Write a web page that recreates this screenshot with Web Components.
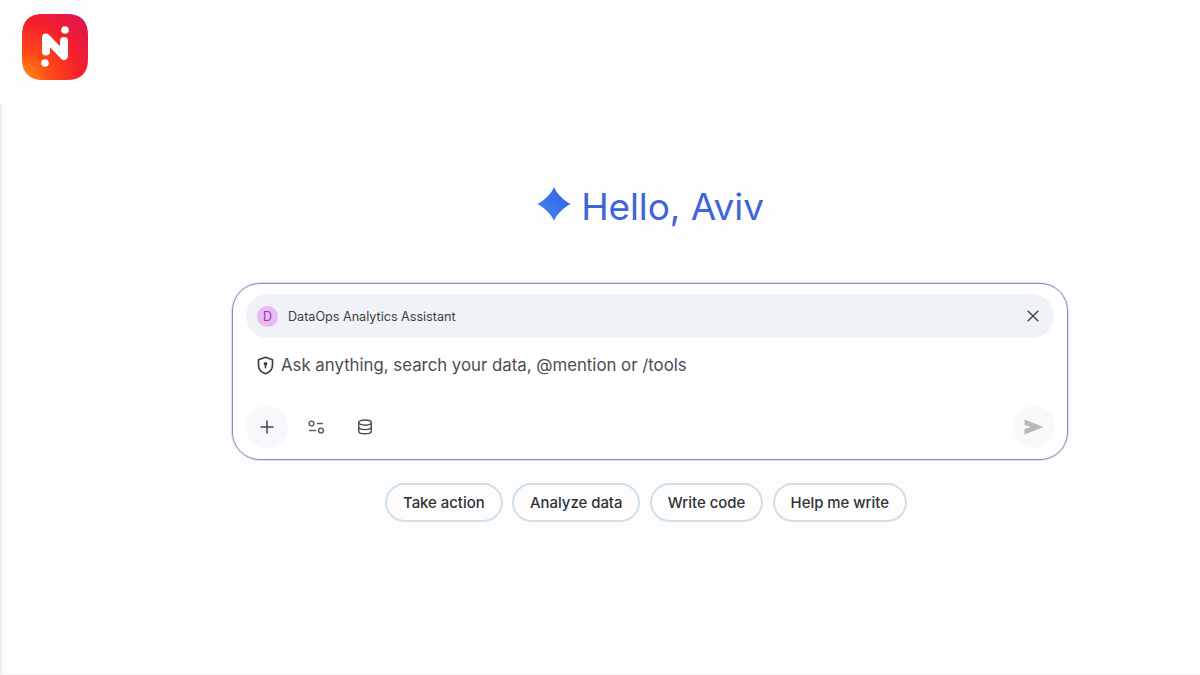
<!DOCTYPE html>
<html>
<head>
<meta charset="utf-8">
<style>
	html, body { margin: 0; height: 100%; }
	body { background: #fdfdfd; font-family: Inter, "Liberation Sans", sans-serif; overflow: hidden; }
</style>
</head>
<body>
<chat-app>
	<brand-logo slot="logo"></brand-logo>
	<chat-greeting slot="greeting">Hello, Aviv</chat-greeting>
	<chat-box slot="box">
		<agent-bar name="DataOps Analytics Assistant" initial="D"></agent-bar>
	</chat-box>
	<div slot="chips">
		<prompt-chip>Take action</prompt-chip>
		<prompt-chip>Analyze data</prompt-chip>
		<prompt-chip>Write code</prompt-chip>
		<prompt-chip>Help me write</prompt-chip>
	</div>
</chat-app>

<script type="text/javascript">
	class ChatApp extends HTMLElement {
		connectedCallback() {
			this.attachShadow({mode: 'open'}).innerHTML = `
				<style>
					:host { display: block; position: relative; height: 675px; box-sizing: border-box; padding-top: 103px; }
					.frame {
						height: 100%;
						box-sizing: border-box;
						border-left: 2px solid #efefef;
						border-bottom: 1px solid #f8f8f8;
						padding: 79px 130px 0 230px;
						display: flex;
						flex-direction: column;
						align-items: center;
					}
					::slotted([slot=chips]) { display: flex; gap: 9.4px; margin: 23px 0 0 -10px; }
					.logo { position: absolute; left: 22px; top: 14px; }
				</style>
				<div class="logo"><slot name="logo"></slot></div>
				<div class="frame">
					<slot name="greeting"></slot>
					<slot name="box"></slot>
					<slot name="chips"></slot>
				</div>`;
		}
	}

	class BrandLogo extends HTMLElement {
		connectedCallback() {
			this.attachShadow({mode: 'open'}).innerHTML = `
				<style>:host { display: block; width: 66px; height: 66px; } svg { display: block; }</style>
				<svg width="66" height="66" viewBox="0 0 66 66">
					<defs>
						<radialGradient id="g" cx="0" cy="1" r="1.3">
							<stop offset="0" stop-color="#ff9a12"/>
							<stop offset="0.32" stop-color="#ff4a18"/>
							<stop offset="0.68" stop-color="#f4202c"/>
							<stop offset="1" stop-color="#e0164f"/>
						</radialGradient>
					</defs>
					<path d="M21 0H45C59 0 66 7 66 21V45C66 59 59 66 45 66H21C7 66 0 59 0 45V21C0 7 7 0 21 0Z" fill="url(#g)"/>
					<path d="M24 37.5V23.5L42 42V27" fill="none" stroke="#fff" stroke-width="8" stroke-linecap="round" stroke-linejoin="round"/>
					<circle cx="43" cy="16" r="3.8" fill="#fff"/>
					<circle cx="23" cy="49" r="3.8" fill="#fff"/>
				</svg>`;
		}
	}

	class ChatGreeting extends HTMLElement {
		connectedCallback() {
			this.attachShadow({mode: 'open'}).innerHTML = `
				<style>
					:host { display: flex; align-items: center; gap: 10px; height: 50px; margin-bottom: 51px; margin-left: -1px;
						color: #3f66d6; font-size: 37px; line-height: 50px; letter-spacing: -0.1px; }
					svg { display: block; margin-top: -6px; }
				</style>
				<svg width="34" height="34" viewBox="0 0 34 34">
					<defs>
						<linearGradient id="s" x1="0" y1="1" x2="1" y2="0">
							<stop offset="0" stop-color="#4a86f2"/>
							<stop offset="1" stop-color="#2a5fe8"/>
						</linearGradient>
					</defs>
					<path d="M17 0C19 6 28 15 34 17C28 19 19 28 17 34C15 28 6 19 0 17C6 15 15 6 17 0Z" fill="url(#s)"/>
				</svg>
				<span><slot></slot></span>`;
		}
	}

	class ChatBox extends HTMLElement {
		connectedCallback() {
			this.attachShadow({mode: 'open'}).innerHTML = `
				<style>
					:host { display: block; width: 836px; height: 177px; box-sizing: border-box; margin-left: -2px;
						border: 1px solid #8f8abb; box-shadow: 0 0 0 1px rgba(165,160,205,.3); border-radius: 28px; background: #fff; padding: 10px 13px 11px; }
					.wrap { display: flex; flex-direction: column; height: 100%; }
					.ask { display: flex; align-items: center; gap: 7px; padding: 15px 0 0 11px; height: 24px;
						font-size: 16.8px; color: #4a4d52; }
					.ask svg { display: block; }
					.tools { margin-top: auto; display: flex; align-items: center; }
					.btn { width: 42px; height: 42px; border-radius: 50%; display: flex; align-items: center; justify-content: center; }
					.plus { background: #f7f7fc; }
					.plain { margin-left: 8px; }
					.plain + .plain { margin-left: 6px; }
					.send { margin-left: auto; margin-right: -1px; background: #f9f9fa; }
					svg { display: block; }
				</style>
				<div class="wrap">
					<slot></slot>
					<div class="ask">
						<svg width="17" height="19" viewBox="0 0 17 19" fill="none">
							<path d="M8.5 1.2L15.5 3.8V9C15.5 13 12.8 16.3 8.5 17.8C4.2 16.3 1.5 13 1.5 9V3.8Z" stroke="#3c4043" stroke-width="1.7" stroke-linejoin="round"/>
							<circle cx="8.5" cy="7.8" r="1.9" fill="#3c4043"/>
							<rect x="7.7" y="8.5" width="1.6" height="3.8" fill="#3c4043"/>
						</svg>
						<span>Ask anything, search your data, @mention or /tools</span>
					</div>
					<div class="tools">
						<div class="btn plus">
							<svg width="16" height="16" viewBox="0 0 16 16"><path d="M8 1.5V14.5M1.5 8H14.5" stroke="#45474c" stroke-width="1.5" fill="none"/></svg>
						</div>
						<div class="btn plain">
							<svg width="18" height="14" viewBox="0 0 18 14" fill="none" stroke="#55585d" stroke-width="1.4">
								<circle cx="3.5" cy="3.5" r="2.4"/><path d="M9 3.5H15"/>
								<circle cx="13" cy="10.5" r="2.4"/><path d="M1 10.5H8"/>
							</svg>
						</div>
						<div class="btn plain">
							<svg width="16" height="16" viewBox="0 0 16 16" fill="none" stroke="#4a4d52" stroke-width="1.4">
								<ellipse cx="8" cy="3.6" rx="6.3" ry="2.6"/>
								<path d="M1.7 3.6V12.2C1.7 13.7 4.5 14.8 8 14.8S14.3 13.7 14.3 12.2V3.6"/>
								<path d="M1.7 8C1.7 9.5 4.5 10.6 8 10.6S14.3 9.5 14.3 8"/>
							</svg>
						</div>
						<div class="btn send">
							<svg width="20" height="16" viewBox="0 0 20 16"><path d="M0.5 0.5L19.5 8L0.5 15.5V10L7 8L0.5 6Z" fill="#b9b9bc"/></svg>
						</div>
					</div>
				</div>`;
		}
	}

	class AgentBar extends HTMLElement {
		connectedCallback() {
			this.attachShadow({mode: 'open'}).innerHTML = `
				<style>
					:host { display: flex; align-items: center; height: 44px; box-sizing: border-box; padding: 0 15px 0 11px;
						background: #eff2f6; border-radius: 22px; }
					.av { width: 21px; height: 21px; border-radius: 50%; background: #ecb9f2; color: #8a3fa8;
						display: flex; align-items: center; justify-content: center; font-size: 12.5px; }
					.name { margin-left: 10px; font-size: 12.6px; color: #3c4043; flex: 1; }
					svg { display: block; }
				</style>
				<div class="av">${this.getAttribute('initial')}</div>
				<div class="name">${this.getAttribute('name')}</div>
				<svg width="12" height="12" viewBox="0 0 12 12"><path d="M0.7 0.7L11.3 11.3M11.3 0.7L0.7 11.3" stroke="#3c4043" stroke-width="1.4" fill="none"/></svg>`;
		}
	}

	class PromptChip extends HTMLElement {
		connectedCallback() {
			this.attachShadow({mode: 'open'}).innerHTML = `
				<style>
					:host { display: flex; align-items: center; height: 39px; box-sizing: border-box; padding: 0 16px;
						border: 2px solid #cfe0ec; border-radius: 20px; background: #fdfdfe;
						font-size: 14.9px; font-weight: 500; color: #303236; }
				</style>
				<slot></slot>`;
		}
	}

	window.customElements.define("chat-app", ChatApp);
	window.customElements.define("brand-logo", BrandLogo);
	window.customElements.define("chat-greeting", ChatGreeting);
	window.customElements.define("chat-box", ChatBox);
	window.customElements.define("agent-bar", AgentBar);
	window.customElements.define("prompt-chip", PromptChip);
</script>
</body>
</html>
